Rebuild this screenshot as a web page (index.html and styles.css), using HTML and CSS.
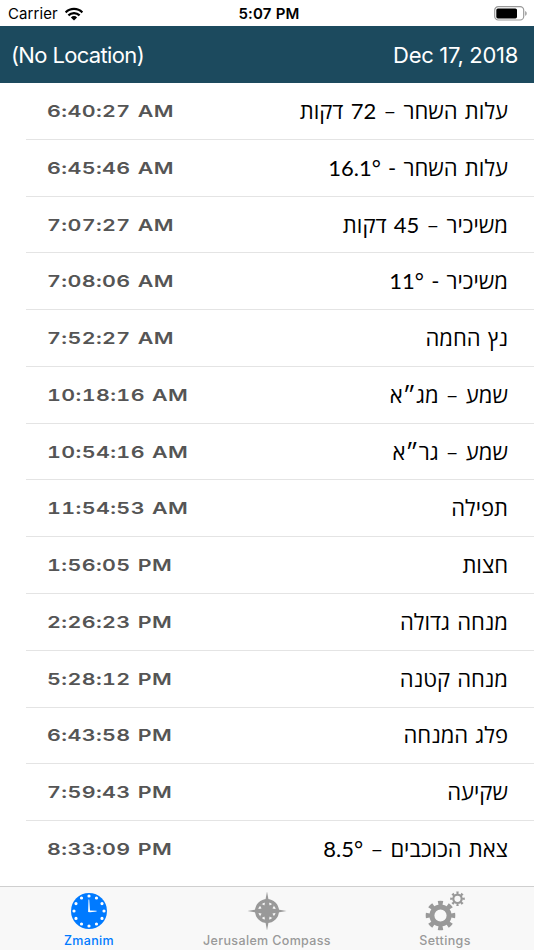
FILE: index.html
```
<!DOCTYPE html>
<html lang="en">
<head>
    <meta charset="UTF-8">
    <meta name="viewport" content="width=device-width, initial-scale=1.0">
    <title>Zmanim</title>
    <link rel="stylesheet" href="styles.css">
</head>
<body>
    <div class="status-bar">
        <div class="carrier">
            <span>Carrier</span>
            <svg class="wifi" width="18" height="14" viewBox="0 0 18 14">
                <path d="M.6 5.4a11.9 11.9 0 0 1 16.8 0M3.4 8.4a7.9 7.9 0 0 1 11.2 0" fill="none" stroke="#000" stroke-width="2.2"/>
                <path d="M5.9 10.4a4.4 4.4 0 0 1 6.2 0L9 13.6z"/>
            </svg>
        </div>
        <span class="clock">5:07 PM</span>
        <svg class="battery" width="34" height="15" viewBox="0 0 34 15">
            <rect x=".7" y=".7" width="29" height="13.3" rx="3.6" fill="none" stroke="#999" stroke-width="1.2"/>
            <rect x="2.3" y="2.4" width="20.7" height="10" rx="1.6"/>
            <path d="M31.2 5c2 .8 2 4 0 4.8z" fill="#999"/>
        </svg>
    </div>
    <header class="nav-bar">
        <span class="location">(No Location)</span>
        <span class="date">Dec 17, 2018</span>
    </header>
    <ul class="zmanim">
        <li><span class="time">6:40:27 AM</span><span class="name" dir="rtl">עלות השחר – 72 דקות</span></li>
        <li><span class="time">6:45:46 AM</span><span class="name" dir="rtl">עלות השחר - 16.1°</span></li>
        <li><span class="time">7:07:27 AM</span><span class="name" dir="rtl">משיכיר – 45 דקות</span></li>
        <li><span class="time">7:08:06 AM</span><span class="name" dir="rtl">משיכיר - 11°</span></li>
        <li><span class="time">7:52:27 AM</span><span class="name" dir="rtl">נץ החמה</span></li>
        <li><span class="time">10:18:16 AM</span><span class="name" dir="rtl">שמע – מג״א</span></li>
        <li><span class="time">10:54:16 AM</span><span class="name" dir="rtl">שמע – גר״א</span></li>
        <li><span class="time">11:54:53 AM</span><span class="name" dir="rtl">תפילה</span></li>
        <li><span class="time">1:56:05 PM</span><span class="name" dir="rtl">חצות</span></li>
        <li><span class="time">2:26:23 PM</span><span class="name" dir="rtl">מנחה גדולה</span></li>
        <li><span class="time">5:28:12 PM</span><span class="name" dir="rtl">מנחה קטנה</span></li>
        <li><span class="time">6:43:58 PM</span><span class="name" dir="rtl">פלג המנחה</span></li>
        <li><span class="time">7:59:43 PM</span><span class="name" dir="rtl">שקיעה</span></li>
        <li><span class="time">8:33:09 PM</span><span class="name" dir="rtl">צאת הכוכבים – 8.5°</span></li>
    </ul>
    <nav class="tab-bar">
        <a class="tab active">
            <svg width="44" height="44" viewBox="-22 -22 44 44">
                <circle r="18" fill="currentColor"/>
                <circle r="15" fill="none" stroke="#fff" stroke-width="3.2" stroke-linecap="round" stroke-dasharray="0 30" pathLength="360"/>
                <path d="M-.9 1L-.5-11.5h.7L1-.6 7.6-.2v.8L1 1.2z" fill="#fff"/>
            </svg>
            <span>Zmanim</span>
        </a>
        <a class="tab">
            <svg width="44" height="44" viewBox="-22 -22 44 44">
                <circle r="10.4" fill="none" stroke="currentColor" stroke-width="3.2"/>
                <path d="M0-19.5L2.6-5.4 7-8 6-5.5 8-7 5.4-2.6 19.5 0 5.4 2.6 8 7 5.5 6 7 8 2.6 5.4 0 19.5-2.6 5.4-7 8-6 5.5-8 7-5.4 2.6-19.5 0-5.4-2.6-8-7-5.5-6-7-8-2.6-5.4z" fill="currentColor"/>
                <circle r="5.8" fill="currentColor"/>
            </svg>
            <span>Jerusalem Compass</span>
        </a>
        <a class="tab">
            <svg width="44" height="44" viewBox="0 0 44 44">
                <g transform="translate(17.5 26.5)" fill="none" stroke="currentColor">
                    <circle r="8.6" stroke-width="5"/>
                    <circle r="12.3" stroke-width="5" pathLength="360" stroke-dasharray="22 23" stroke-dashoffset="11"/>
                </g>
                <g transform="translate(34.5 9.8)" fill="none" stroke="currentColor">
                    <circle r="4.2" stroke-width="2.2"/>
                    <circle r="6" stroke-width="2.6" pathLength="360" stroke-dasharray="21 24" stroke-dashoffset="10.5"/>
                </g>
            </svg>
            <span>Settings</span>
        </a>
    </nav>
</body>
</html>
```
FILE: styles.css
```
* {
    box-sizing: border-box;
}
body {
    margin: 0;
    height: 950px;
    display: flex;
    flex-direction: column;
    overflow: hidden;
    background: #fff;
    color: #000;
    font-family: Inter, "Liberation Sans", sans-serif;
}
.status-bar {
    display: grid;
    grid-template-columns: 1fr auto 1fr;
    align-items: center;
    height: 26px;
    padding: 1px 6px 0 8px;
    font-size: 15px;
}
.carrier {
    display: flex;
    align-items: center;
    gap: 7px;
    letter-spacing: 0.1px;
}
.clock {
    padding-left: 2px;
    font-weight: 600;
    letter-spacing: 0.2px;
}
.battery {
    justify-self: end;
}
.nav-bar {
    display: flex;
    align-items: center;
    justify-content: space-between;
    height: 56.5px;
    padding: 2px 16px 0 11px;
    background: #1c4a5e;
    color: #fff;
    font-size: 22px;
}
.location {
    letter-spacing: -0.65px;
}
.date {
    letter-spacing: -0.3px;
}
.zmanim {
    flex: 1;
    margin: 0;
    padding: 0.6px 0 0 26px;
    list-style: none;
}
.zmanim li {
    display: flex;
    align-items: center;
    justify-content: space-between;
    height: 56.77px;
    padding: 0 26px 0 21px;
    border-bottom: 1px solid #e4e4e4;
}
.zmanim li:last-child {
    border-bottom: none;
}
.time {
    color: #555;
    font-size: 16.5px;
    font-weight: 600;
    font-variant-numeric: tabular-nums;
    font-feature-settings: "calt" 0;
    letter-spacing: 0.3px;
    word-spacing: 0.8px;
    transform: scaleX(1.3);
    transform-origin: left;
}
.name {
    padding-bottom: 2px;
    font-family: Lato, "Open Sans", "Liberation Sans", sans-serif;
    font-size: 22px;
    word-spacing: 1.6px;
}
.tab-bar {
    display: grid;
    grid-template-columns: repeat(3, 1fr);
    height: 64px;
    border-top: 1px solid #cfcfcf;
    background: #f8f8f8;
}
.tab {
    display: flex;
    flex-direction: column;
    align-items: center;
    padding-top: 2px;
    color: #999;
    font-size: 12.5px;
    font-weight: 500;
    letter-spacing: 0.35px;
    line-height: 16px;
}
.tab.active {
    color: #007aff;
}
```
